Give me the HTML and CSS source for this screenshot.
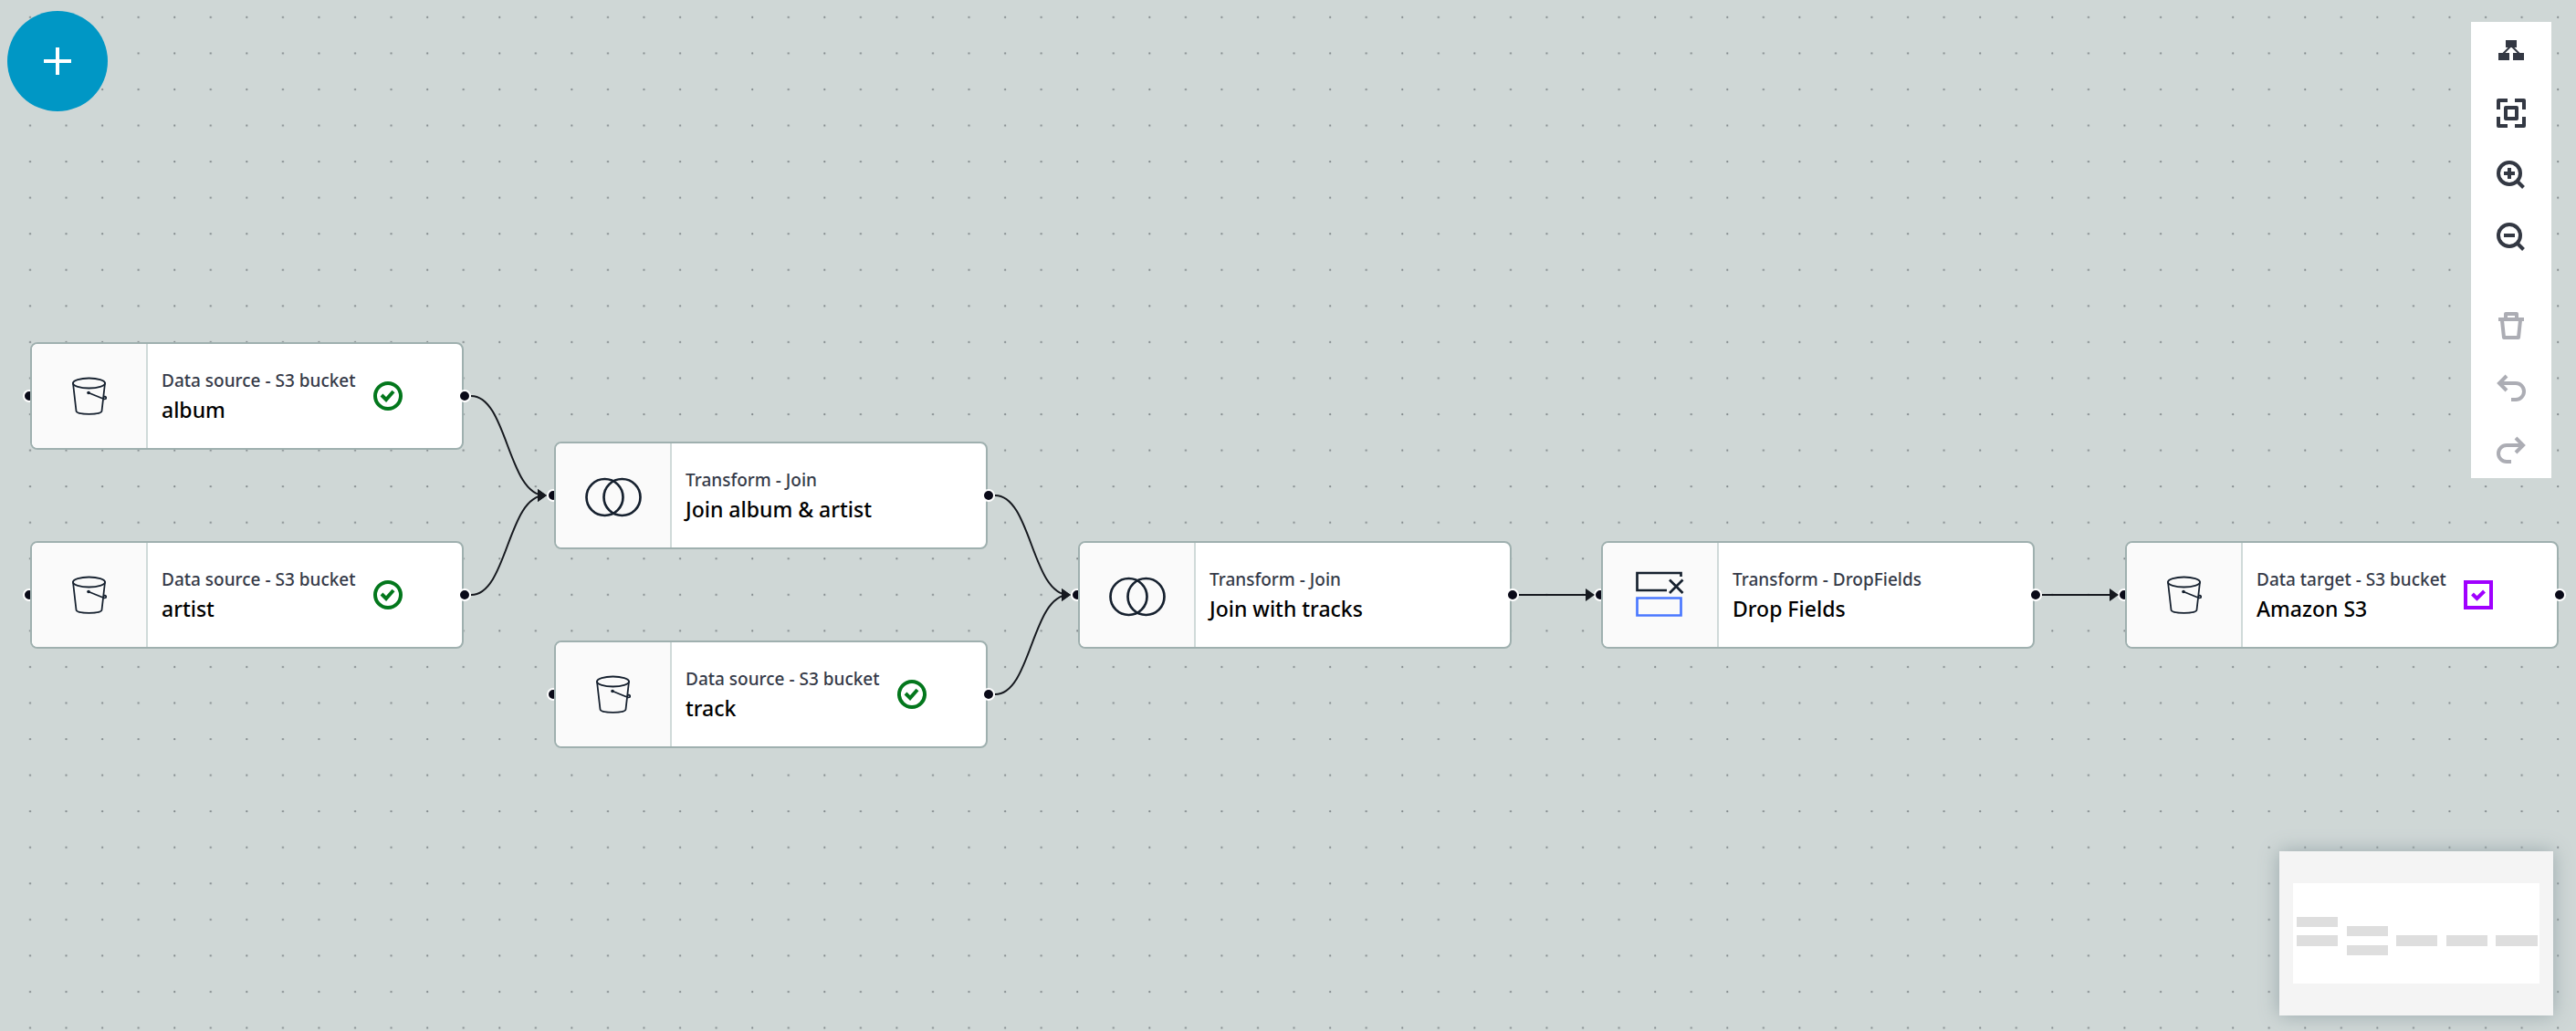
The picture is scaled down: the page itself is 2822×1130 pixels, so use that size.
FILE: index.html
```html
<!DOCTYPE html>
<html lang="en">
<head>
<meta charset="utf-8">
<title>Visual job editor</title>
<link rel="stylesheet" href="styles.css">
</head>
<body>
<svg width="0" height="0" class="defs" aria-hidden="true">
  <defs>
    <symbol id="bucket" viewBox="0 0 38 42">
      <g fill="none" stroke="#16212f" stroke-width="1.800" stroke-linecap="round" stroke-linejoin="round">
        <ellipse cx="18.500" cy="7" rx="17.500" ry="5.500"/>
        <path d="M1 7 4.500 37.500c.5 4.500 27.500 4.500 28 0L36 7M18 17.500l16 6.500c4 1.500 4.500-2.500 1-2.500"/>
      </g>
      <circle cx="18" cy="17.500" r="1.800" fill="#16212f"/>
    </symbol>
    <symbol id="join" viewBox="0 0 62 48">
      <g fill="none" stroke="#16212f" stroke-width="2.700">
        <circle cx="21.500" cy="26" r="20"/><circle cx="40.500" cy="26" r="20"/>
      </g>
    </symbol>
    <symbol id="ok" viewBox="0 0 32 32">
      <circle cx="16" cy="16" r="14" fill="none" stroke="#03771c" stroke-width="4"/>
      <path d="m9 15 5 5 8-9" fill="none" stroke="#03771c" stroke-width="4"/>
    </symbol>
  </defs>
</svg>

<main class="canvas">
  <svg class="grid" aria-hidden="true">
    <defs>
      <pattern id="dots" x="13" y="-1" width="39.560" height="39.560" patternUnits="userSpaceOnUse">
        <circle cx="20" cy="20" r="1.100" fill="#7f8689"/>
      </pattern>
    </defs>
    <rect width="100%" height="100%" fill="url(#dots)"/>
  </svg>

  <article class="node col1 row1">
    <i class="port in"></i>
    <div class="box"><div class="kind"><svg class="bucket"><use href="#bucket"/></svg></div>
      <div class="text"><span class="type">Data source - S3 bucket</span><strong class="name">album</strong></div>
      <svg class="status"><use href="#ok"/></svg></div>
    <i class="port out"></i>
  </article>
  <article class="node col1 row3">
    <i class="port in"></i>
    <div class="box"><div class="kind"><svg class="bucket"><use href="#bucket"/></svg></div>
      <div class="text"><span class="type">Data source - S3 bucket</span><strong class="name">artist</strong></div>
      <svg class="status"><use href="#ok"/></svg></div>
    <i class="port out"></i>
  </article>
  <article class="node col2 row2">
    <i class="port in"></i>
    <div class="box"><div class="kind"><svg class="join"><use href="#join"/></svg></div>
      <div class="text"><span class="type">Transform - Join</span><strong class="name">Join album &amp; artist</strong></div></div>
    <i class="port out"></i>
  </article>
  <article class="node col2 row4">
    <i class="port in"></i>
    <div class="box"><div class="kind"><svg class="bucket"><use href="#bucket"/></svg></div>
      <div class="text"><span class="type">Data source - S3 bucket</span><strong class="name">track</strong></div>
      <svg class="status"><use href="#ok"/></svg></div>
    <i class="port out"></i>
  </article>
  <article class="node col3 row3">
    <i class="port in"></i>
    <div class="box"><div class="kind"><svg class="join"><use href="#join"/></svg></div>
      <div class="text"><span class="type">Transform - Join</span><strong class="name">Join with tracks</strong></div></div>
    <i class="port out"></i>
  </article>
  <article class="node col4 row3">
    <i class="port in"></i>
    <div class="box"><div class="kind"><svg class="drop" viewBox="0 0 54 52" fill="none" stroke-width="2.700">
      <path d="M49.500 6V2h-48v19H34M37 9.500l14.500 14.500M51.500 9.500 37 24" stroke="#16212f"/>
      <path d="M1.500 29.500h48v19h-48z" stroke="#4a78ff"/></svg></div>
      <div class="text"><span class="type">Transform - DropFields</span><strong class="name">Drop Fields</strong></div></div>
    <i class="port out"></i>
  </article>
  <article class="node col5 row3">
    <i class="port in"></i>
    <div class="box"><div class="kind"><svg class="bucket"><use href="#bucket"/></svg></div>
      <div class="text"><span class="type">Data target - S3 bucket</span><strong class="name">Amazon S3</strong></div>
      <svg class="status" viewBox="0 0 32 32" fill="none" stroke="#a000ff" stroke-width="4"><path d="M2 2h28v28H2zM9.500 15l5 5 8-8"/></svg></div>
    <i class="port out"></i>
  </article>

  <svg class="edges" aria-hidden="true">
    <defs>
      <marker id="arrow" viewBox="0 0 10 14" markerWidth="10" markerHeight="14" refX="8" refY="7" markerUnits="userSpaceOnUse">
        <path d="M0 0 10 7 0 14z" fill="#16191f"/>
      </marker>
    </defs>
    <g fill="none" stroke="#16191f" stroke-width="2">
      <path d="M516 434C556 434 556 543 597 543" marker-end="url(#arrow)"/>
      <path d="M516 652C556 652 556 543 597 543" marker-end="url(#arrow)"/>
      <path d="M1090 543C1130 543 1130 652 1171 652" marker-end="url(#arrow)"/>
      <path d="M1090 761C1130 761 1130 652 1171 652" marker-end="url(#arrow)"/>
      <path d="M1664 652H1745" marker-end="url(#arrow)"/>
      <path d="M2237 652H2319" marker-end="url(#arrow)"/>
    </g>
  </svg>

  <button class="add" type="button" aria-label="Add node">
    <svg viewBox="0 0 30 30" width="30" height="30"><path d="M15 0v30M0 15h30" stroke="#fff" stroke-width="4"/></svg>
  </button>

  <nav class="tools" aria-label="Canvas controls">
    <button type="button" aria-label="Arrange nodes"><svg viewBox="0 0 32 32"><path d="M10 4h12v8H10zM2 18h12v8H2zM18 18h12v8H18z" fill="currentColor" stroke="none"/><path d="m15 11-8 8M17 11l8 8" stroke-width="2"/></svg></button>
    <button type="button" aria-label="Fit to screen"><svg viewBox="0 0 32 32"><path d="M2 12V2h10M20 2h10v10M30 20v10H20M12 30H2V20" stroke-linejoin="round"/><path d="M10 10h12v12H10z" stroke-linejoin="round"/></svg></button>
    <button type="button" aria-label="Zoom in"><svg viewBox="0 0 32 32"><circle cx="14" cy="14" r="12"/><path d="M8 14h12M14 8v12M22.500 22.500l7 7"/></svg></button>
    <button type="button" aria-label="Zoom out"><svg viewBox="0 0 32 32"><circle cx="14" cy="14" r="12"/><path d="M8 14h12M22.500 22.500l7 7"/></svg></button>
    <button type="button" aria-label="Delete" class="group" disabled><svg viewBox="0 0 32 32"><path d="M2 9h28M10 9V3h12v6M6 10l2 19h16l2-19" stroke-linejoin="round"/></svg></button>
    <button type="button" aria-label="Undo" disabled><svg viewBox="0 0 32 32"><path d="M3 11h18a9 9 0 0 1 0 18h-5M11 3l-8 8 8 8"/></svg></button>
    <button type="button" aria-label="Redo" disabled><svg viewBox="0 0 32 32"><path d="M29 11H11a9 9 0 0 0 0 18h5M21 3l8 8-8 8"/></svg></button>
  </nav>

  <aside class="minimap" aria-label="Minimap">
    <svg viewBox="0 0 270 110" fill="#dedede">
      <path d="M0 0h270v110H0z" fill="#fff"/>
      <path d="M4 37h45v11H4zM4 57h45v12H4zM59 47h45v11H59zM59 68h45v11H59zM113 57h45v12h-45zM168 57h45v12h-45zM222 57h46v12h-46z"/>
    </svg>
  </aside>
</main>
</body>
</html>
```
FILE: styles.css
```css
* { box-sizing: border-box; }

body {
  margin: 0;
  font-family: "Noto Sans", "Open Sans", sans-serif;
  font-weight: 500;
  color: #000;
}

.defs { position: absolute; }

.canvas {
  position: relative;
  min-height: 100vh;
  overflow: hidden;
  background: #cfd7d6;
}

.grid, .edges {
  position: absolute;
  inset: 0;
  width: 100%;
  height: 100%;
  pointer-events: none;
}

.node {
  position: absolute;
  width: 475px;
  height: 118px;
}

.col1 { left: 33px; }
.col2 { left: 607px; }
.col3 { left: 1181px; }
.col4 { left: 1754px; }
.col5 { left: 2328px; }
.row1 { top: 375px; }
.row2 { top: 484px; }
.row3 { top: 593px; }
.row4 { top: 702px; }

.box {
  position: relative;
  display: flex;
  align-items: center;
  height: 100%;
  overflow: hidden;
  background: #fff;
  border: 2px solid #9fb0af;
  border-radius: 8px;
}

.kind {
  display: flex;
  align-items: center;
  justify-content: center;
  width: 127px;
  height: 100%;
  background: #fafafa;
  border-right: 2px solid #d0dad9;
}

.bucket { width: 38px; height: 42px; }
.join { width: 62px; height: 48px; }
.drop { width: 54px; height: 52px; }

.text {
  display: flex;
  flex-direction: column;
  padding: 0 0 2px 15px;
}

.type {
  font-size: 19px;
  line-height: 32px;
  color: #353a48;
}

.name {
  font-size: 23px;
  font-weight: 500;
  line-height: 32px;
}

.status {
  width: 32px;
  height: 32px;
  margin-left: 19px;
}

.port {
  position: absolute;
  top: 52px;
  width: 14px;
  height: 14px;
  background: #0a0a18;
  border: 2px solid #fff;
  border-radius: 50%;
}

.in { left: -8px; }
.out { right: -8px; }

button {
  display: flex;
  align-items: center;
  justify-content: center;
  padding: 0;
  border: 0;
  background: none;
}

.add {
  position: absolute;
  left: 8px;
  top: 12px;
  width: 110px;
  height: 110px;
  border-radius: 50%;
  background: #0097c5;
}

.tools {
  position: absolute;
  top: 24px;
  right: 27px;
  display: flex;
  flex-direction: column;
  align-items: center;
  gap: 36px;
  width: 88px;
  padding: 16px 0 15px;
  background: #fff;
}

.tools button { color: #333843; }
.tools button:disabled { color: #acadb4; }
.tools .group { margin-top: 29px; }

.tools svg {
  width: 32px;
  height: 32px;
  fill: none;
  stroke: currentColor;
  stroke-width: 4;
}

.minimap {
  position: absolute;
  right: 25px;
  bottom: 17px;
  display: flex;
  padding: 35px 15px;
  width: 300px;
  background: #f4f4f4;
  box-shadow: 0 0 20px #9aa8ac;
}

.minimap svg { width: 100%; }
```
